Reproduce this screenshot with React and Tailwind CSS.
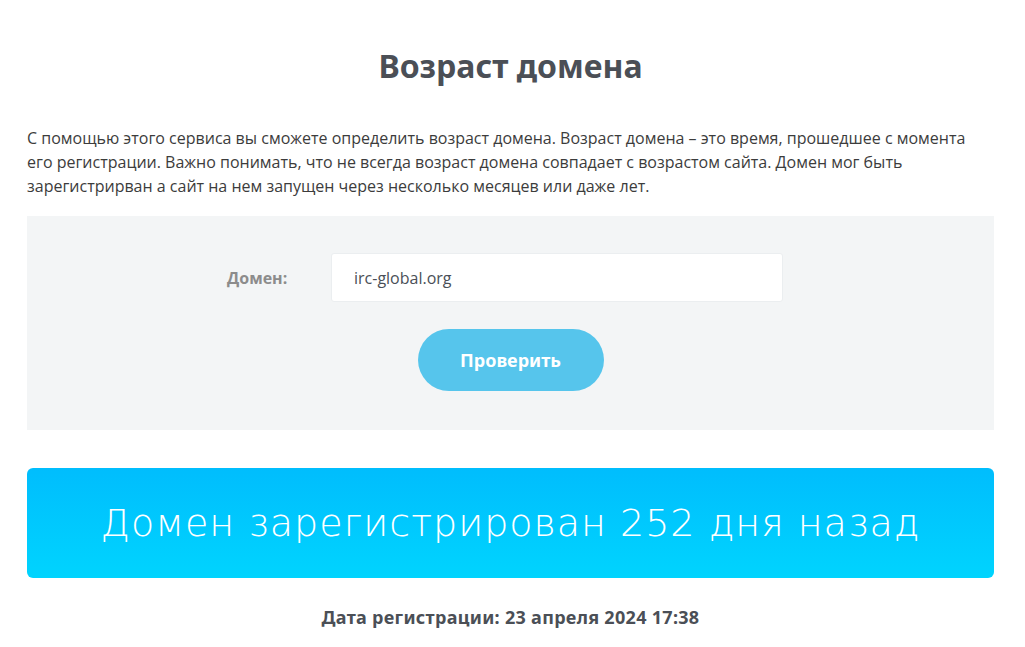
export default function App() {
  return (
    <div className="min-h-screen bg-white font-['Open_Sans',sans-serif]">
      <main className="ml-[27px] mr-[31px] pt-[44px]">
        <h1 className="text-center text-[32px] font-bold leading-[44px] text-[#4b4f56] font-['Noto_Sans',sans-serif]">
          Возраст домена
        </h1>

        <p className="mt-[38px] text-[16px] leading-[24px] text-[#3c3c3c]">
          С помощью этого сервиса вы сможете определить возраст домена. Возраст домена – это время, прошедшее с момента
          <br />
          его регистрации. Важно понимать, что не всегда возраст домена совпадает с возрастом сайта. Домен мог быть
          <br />
          зарегистрирван а сайт на нем запущен через несколько месяцев или даже лет.
        </p>

        {/* Form panel */}
        <div className="mt-[18px] h-[214px] bg-[#f3f5f6] pt-[37px]">
          <div className="flex items-center">
            <label className="ml-[200px] w-[104px] text-[16px] font-bold text-[#8c8c8c]">Домен:</label>
            <input
              readOnly
              value="irc-global.org"
              className="h-[49px] w-[452px] rounded-[3px] border border-[#ebeef0] bg-white px-[22px] text-[16px] text-[#4a4f57] outline-none"
            />
          </div>
          <div className="mt-[27px] flex justify-center">
            <button className="h-[62px] w-[186px] rounded-full bg-[#56c5ec] text-[18px] font-bold text-white font-['Noto_Sans',sans-serif]">
              Проверить
            </button>
          </div>
        </div>

        {/* Result */}
        <div className="mt-[38px] flex h-[110px] items-center justify-center rounded-[6px] bg-gradient-to-b from-[#00bdfd] to-[#00d4fe]">
          <span className="text-[38px] font-extralight tracking-[1px] text-white font-['DejaVu_Sans',sans-serif]">
            Домен зарегистрирован 252 дня назад
          </span>
        </div>

        <p className="mt-[26px] text-center text-[18px] font-bold tracking-[0.3px] text-[#4b4f56] font-['Noto_Sans',sans-serif]">
          Дата регистрации: 23 апреля 2024 17:38
        </p>
      </main>
    </div>
  );
}
